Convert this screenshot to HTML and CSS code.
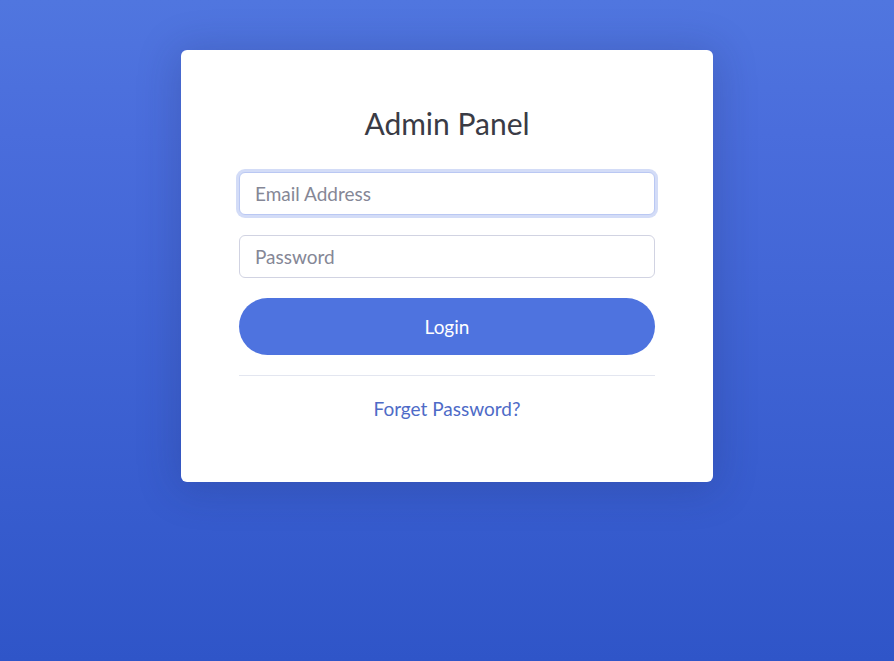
FILE: index.html
```html
<!DOCTYPE html>
<html lang="en">
<head>
  <meta charset="UTF-8" />
  <meta name="viewport" content="width=device-width, initial-scale=1">
  <title>Admin Panel</title>
  <link rel="stylesheet" href="styles.css">
</head>

<body>
  <div class="login-card">
    <h1>Admin Panel</h1>

    <form class="login-form" onsubmit="return false;">
      <input type="email" class="field field-focus" placeholder="Email Address" />
      <input type="password" class="field" placeholder="Password" />
      <button type="submit" class="btn-login">Login</button>
    </form>

    <hr>

    <div class="forgot">
      <a href="#">Forget Password?</a>
    </div>
  </div>
</body>
</html>
```

FILE: styles.css
```css
html {
  height: 100%;
}

body {
  margin: 0;
  min-height: 100%;
  font-family: Lato, "Noto Sans", sans-serif;
  background: linear-gradient(180deg, #5076df 0%, #4a6ddc 20%, #2f55c8 100%);
  padding-top: 50px;
  box-sizing: border-box;
}

.login-card {
  width: 532px;
  margin: 0 auto;
  background: #fff;
  border-radius: 6px;
  box-shadow: 0 4px 40px 4px rgba(30, 40, 90, 0.22);
  padding: 55px 58px 60px;
  box-sizing: border-box;
}

h1 {
  margin: 0 0 31px;
  text-align: center;
  font-size: 30px;
  font-weight: 400;
  line-height: 36px;
  color: #3a3b45;
}

.login-form {
  display: flex;
  flex-direction: column;
  gap: 20px;
}

.field {
  height: 43px;
  padding: 0 15px;
  font-family: inherit;
  font-size: 19px;
  color: #6e707e;
  border: 1px solid #d1d3e2;
  border-radius: 6px;
  box-sizing: border-box;
  outline: none;
}

.field::placeholder {
  color: #858796;
}

.field-focus {
  border-color: #bac8f3;
  box-shadow: 0 0 0 3px rgba(78, 115, 223, 0.25);
}

.btn-login {
  height: 57px;
  border: none;
  border-radius: 30px;
  background: #4e73df;
  color: #fff;
  font-family: inherit;
  font-size: 19px;
  cursor: pointer;
}

hr {
  margin: 20px 0 0;
  border: 0;
  border-top: 1px solid #e3e6f0;
}

.forgot {
  text-align: center;
  margin-top: 21px;
  line-height: 24px;
}

.forgot a {
  color: #4e6bc7;
  font-size: 19px;
  text-decoration: none;
}
```
